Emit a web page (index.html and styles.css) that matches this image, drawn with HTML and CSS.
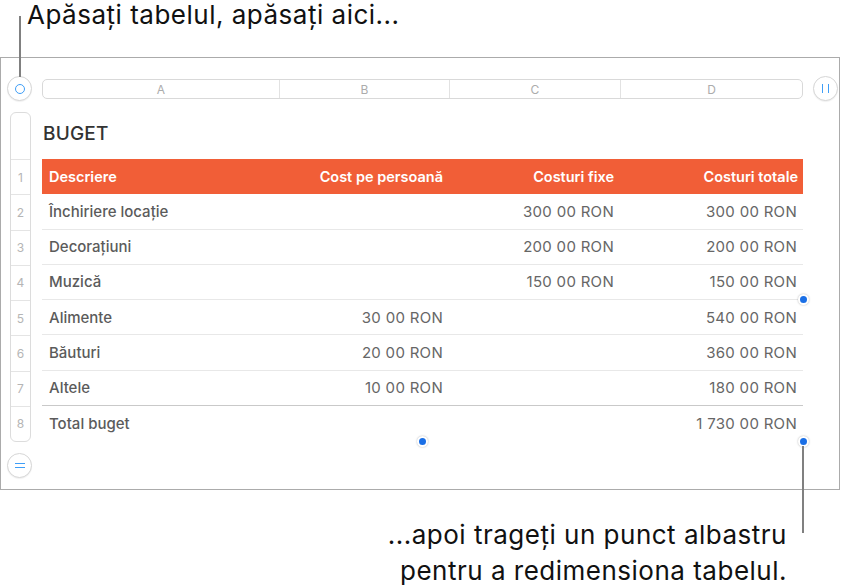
FILE: index.html
```html
<!DOCTYPE html>
<html lang="ro">
<head>
    <meta charset="UTF-8">
    <title>Buget</title>
    <link rel="stylesheet" href="styles.css">
</head>
<body>
    <div class="page">
        <p class="caption caption-top">Apăsați tabelul, apăsați aici...</p>
        <div class="leader leader-top"></div>

        <div class="frame">
            <div class="gutter-cell">
                <span class="round-btn"><span class="ring-icon"></span></span>
            </div>
            <div class="col-bar">
                <div class="col-head col-a">A</div>
                <div class="col-head col-b">B</div>
                <div class="col-head col-c">C</div>
                <div class="col-head col-d">D</div>
            </div>
            <div class="side-cell">
                <span class="round-btn"><span class="bars-icon"></span></span>
            </div>

            <div class="row-bar">
                <div class="row-head row-head-title"></div>
                <div class="row-head">1</div>
                <div class="row-head">2</div>
                <div class="row-head">3</div>
                <div class="row-head">4</div>
                <div class="row-head">5</div>
                <div class="row-head">6</div>
                <div class="row-head">7</div>
                <div class="row-head">8</div>
            </div>

            <div class="sheet">
                <h2 class="sheet-title">BUGET</h2>
                <div class="trow trow-header">
                    <div class="cell">Descriere</div>
                    <div class="cell num">Cost pe persoană</div>
                    <div class="cell num">Costuri fixe</div>
                    <div class="cell num">Costuri totale</div>
                </div>
                <div class="trow">
                    <div class="cell label">Închiriere locație</div>
                    <div class="cell num"></div>
                    <div class="cell num">300 00 RON</div>
                    <div class="cell num">300 00 RON</div>
                </div>
                <div class="trow">
                    <div class="cell label">Decorațiuni</div>
                    <div class="cell num"></div>
                    <div class="cell num">200 00 RON</div>
                    <div class="cell num">200 00 RON</div>
                </div>
                <div class="trow">
                    <div class="cell label">Muzică</div>
                    <div class="cell num"></div>
                    <div class="cell num">150 00 RON</div>
                    <div class="cell num">150 00 RON</div>
                    <span class="handle handle-right"></span>
                </div>
                <div class="trow">
                    <div class="cell label">Alimente</div>
                    <div class="cell num">30 00 RON</div>
                    <div class="cell num"></div>
                    <div class="cell num">540 00 RON</div>
                </div>
                <div class="trow">
                    <div class="cell label">Băuturi</div>
                    <div class="cell num">20 00 RON</div>
                    <div class="cell num"></div>
                    <div class="cell num">360 00 RON</div>
                </div>
                <div class="trow trow-last">
                    <div class="cell label">Altele</div>
                    <div class="cell num">10 00 RON</div>
                    <div class="cell num"></div>
                    <div class="cell num">180 00 RON</div>
                </div>
                <div class="trow trow-total">
                    <div class="cell label">Total buget</div>
                    <div class="cell num"></div>
                    <div class="cell num"></div>
                    <div class="cell num">1 730 00 RON</div>
                    <span class="handle handle-bottom"></span>
                    <span class="handle handle-corner"></span>
                </div>
            </div>
            <div class="side-cell"></div>

            <div class="gutter-cell">
                <span class="round-btn"><span class="lines-icon"></span></span>
            </div>
        </div>

        <div class="leader leader-bottom"></div>
        <p class="caption caption-bottom">...apoi trageți un punct albastru<br>pentru a redimensiona tabelul.</p>
    </div>
</body>
</html>
```

FILE: styles.css
```css
html, body {
    margin: 0;
    padding: 0;
    background: #fff;
}
.page {
    position: relative;
    width: 843px;
    height: 588px;
    overflow: hidden;
    font-family: "Inter", "Liberation Sans", sans-serif;
}

/* callouts */
.caption {
    margin: 0;
    font-size: 26px;
    line-height: 30px;
    letter-spacing: .5px;
    color: #111;
}
.caption-top {
    padding-left: 27px;
    margin-bottom: 27px;
}
.caption-bottom {
    margin-top: 27px;
    padding-right: 56px;
    line-height: 36px;
    text-align: right;
}
.leader {
    position: absolute;
    width: 2px;
    background: #808080;
}
.leader-top {
    left: 19px;
    top: 16px;
    height: 61px;
}
.leader-bottom {
    left: 802px;
    top: 446px;
    height: 87px;
}

/* frame */
.frame {
    box-sizing: border-box;
    width: 840px;
    height: 433px;
    border: 1px solid #ababab;
    display: grid;
    grid-template-columns: 41px 761px 1fr;
    grid-template-rows: 25px 330px auto;
    row-gap: 11px;
    padding-top: 18px;
}
.gutter-cell {
    display: flex;
    align-items: flex-start;
    padding-left: 6px;
}
.side-cell {
    padding-left: 10px;
}
.round-btn {
    box-sizing: border-box;
    width: 25px;
    height: 25px;
    border-radius: 50%;
    border: 1px solid #d6d6d6;
    background: #fff;
    box-shadow: 0 1px 1px rgba(0, 0, 0, .06);
    display: flex;
    align-items: center;
    justify-content: center;
}
.ring-icon {
    box-sizing: border-box;
    width: 10px;
    height: 10px;
    border-radius: 50%;
    border: 1.5px solid #3f9ef7;
}
.bars-icon {
    width: 5px;
    height: 9px;
    border-left: 1.5px solid #3f9ef7;
    border-right: 1.5px solid #3f9ef7;
}
.lines-icon {
    width: 10px;
    height: 3px;
    border-top: 1.5px solid #3f9ef7;
    border-bottom: 1.5px solid #3f9ef7;
}

/* column letters */
.col-bar {
    box-sizing: border-box;
    height: 20px;
    margin-top: 3px;
    border: 1px solid #d9d9d9;
    border-radius: 5px;
    display: grid;
    grid-template-columns: 236px 170px 171px 1fr;
    font-size: 12px;
    color: #acacac;
}
.col-head {
    display: flex;
    align-items: center;
    justify-content: center;
}
.col-head + .col-head {
    border-left: 1px solid #e2e2e2;
}

/* row numbers */
.row-bar {
    box-sizing: border-box;
    width: 21px;
    height: 330px;
    margin-left: 9px;
    border: 1px solid #dcdcdc;
    border-radius: 6px;
    font-size: 12px;
    color: #b5b5b5;
}
.row-head {
    box-sizing: border-box;
    height: 35.25px;
    border-top: 1px solid #e4e4e4;
    display: flex;
    align-items: center;
    justify-content: center;
}
.row-head-title {
    height: 46px;
    border-top: 0;
}

/* the table */
.sheet {
    position: relative;
}
.sheet-title {
    box-sizing: border-box;
    height: 47px;
    margin: 0;
    padding: 11px 0 0 1px;
    font-size: 19px;
    line-height: 22px;
    font-weight: 500;
    letter-spacing: .2px;
    color: #333;
}
.trow {
    position: relative;
    box-sizing: border-box;
    height: 35.25px;
    display: grid;
    grid-template-columns: 237px 170px 171px 183px;
    border-bottom: 1px solid #e8e8e8;
    font-size: 15px;
    color: #666;
}
.trow-header {
    background: #f15e37;
    color: #fff;
    font-size: 14.5px;
    font-weight: 600;
    border-bottom: 0;
}
.trow-last {
    border-bottom-color: #c9c9c9;
}
.trow-total {
    border-bottom: 0;
}
.cell {
    display: flex;
    align-items: center;
    padding: 0 6px 0 7px;
    white-space: nowrap;
}
.num {
    justify-content: flex-end;
    letter-spacing: .3px;
}
.trow-header .num {
    letter-spacing: 0;
}
.trow-header .num:last-child {
    padding-right: 5px;
}
.label {
    font-weight: 500;
    color: #5b5b5b;
}

/* resize handles */
.handle {
    position: absolute;
    box-sizing: border-box;
    width: 11px;
    height: 11px;
    border-radius: 50%;
    background: #1a6fe6;
    border: 2px solid #fff;
    box-shadow: 0 0 2px rgba(0, 0, 0, .3);
}
.handle-right {
    right: -6px;
    bottom: -6px;
}
.handle-bottom {
    left: 375px;
    bottom: -6px;
}
.handle-corner {
    right: -6px;
    bottom: -6px;
}
```
